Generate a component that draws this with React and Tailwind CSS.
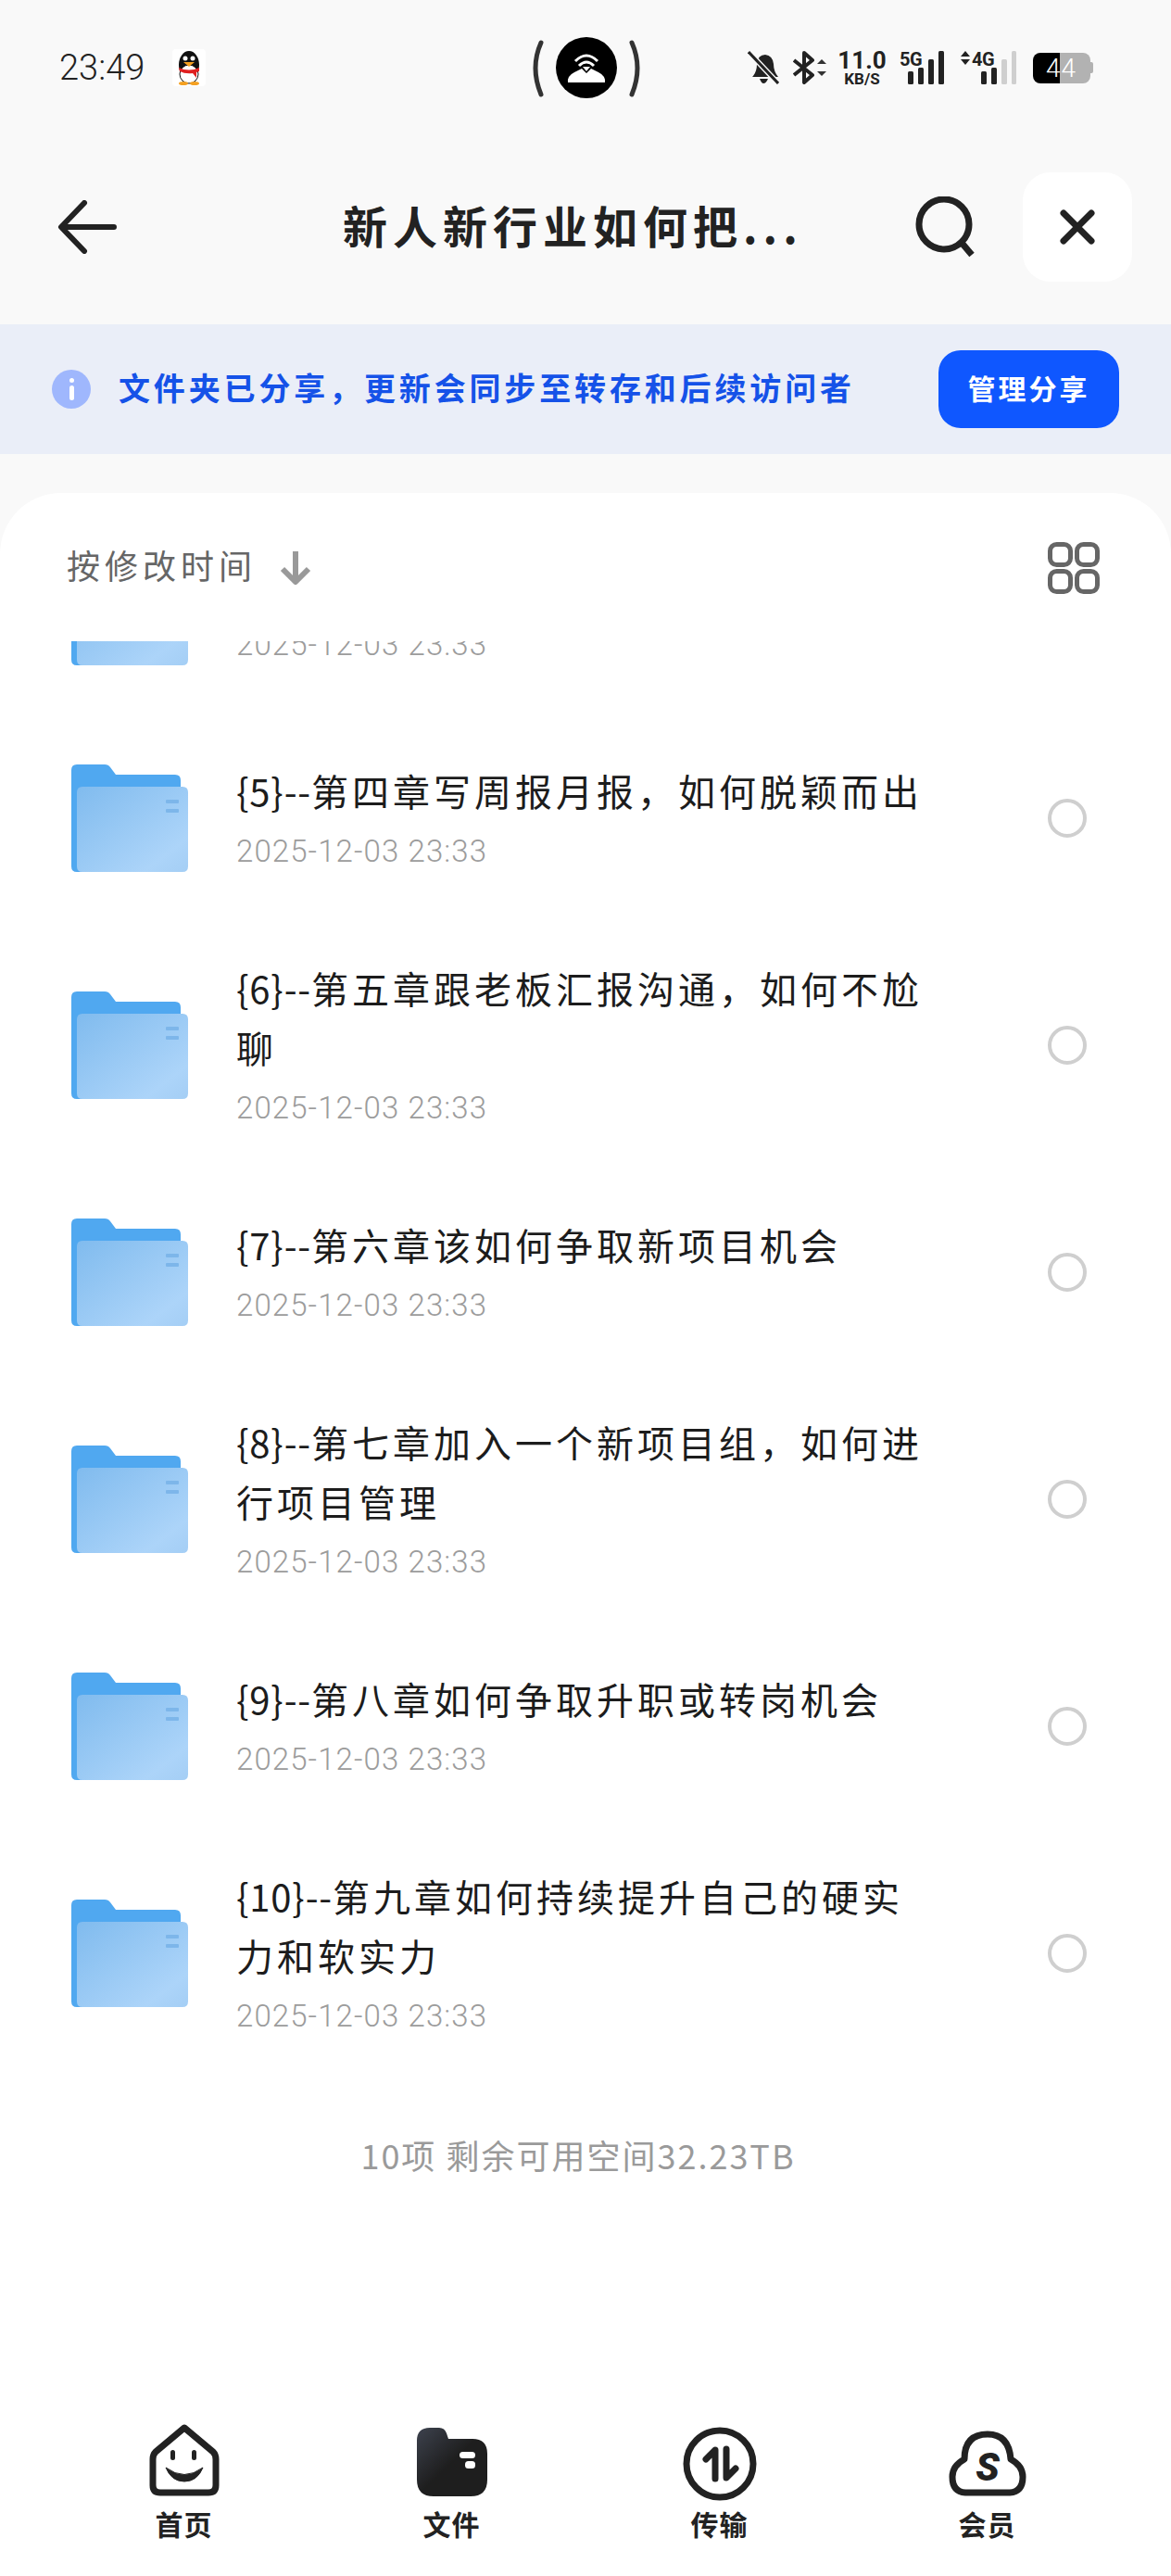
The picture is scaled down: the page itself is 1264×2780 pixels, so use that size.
const files = [
  { id: 5, prefix: '{5}--', title: '第四章写周报月报，如何脱颖而出' },
  { id: 6, prefix: '{6}--', title: '第五章跟老板汇报沟通，如何不尬聊' },
  { id: 7, prefix: '{7}--', title: '第六章该如何争取新项目机会' },
  { id: 8, prefix: '{8}--', title: '第七章加入一个新项目组，如何进行项目管理' },
  { id: 9, prefix: '{9}--', title: '第八章如何争取升职或转岗机会' },
  { id: 10, prefix: '{10}--', title: '第九章如何持续提升自己的硬实力和软实力' },
]

const DATE = '2025-12-03 23:33'

const Folder = ({ id }) => (
  <svg width="126" height="116" viewBox="0 0 126 116" className="shrink-0">
    <defs>
      <linearGradient id={`folder-${id}`} x1="0" y1="0" x2="1" y2="1">
        <stop offset="0" stopColor="#80bbee" />
        <stop offset="0.8" stopColor="#acd4f9" />
        <stop offset="1" stopColor="#a4cef5" />
      </linearGradient>
    </defs>
    <path d="M0 6Q0 0 6 0H36Q40 0 42 3L48 11H112Q118 11 118 17V112Q118 116 112 116H6Q0 116 0 110Z" fill="#50a8f0" />
    <path d="M6 30Q6 24 12 24H120Q126 24 126 30V110Q126 116 120 116H12Q6 116 6 110Z" fill={`url(#folder-${id})`} />
    <rect x="102" y="38" width="14" height="4" rx="1" fill="#7db6ea" />
    <rect x="102" y="48" width="14" height="4" rx="1" fill="#7db6ea" />
  </svg>
)

const FileRow = ({ id, prefix, title }) => (
  <div className="flex h-[245px] items-center pl-[77px] pr-[91px]">
    <Folder id={id} />
    <div className="ml-[52px] w-[770px]">
      <p className="w-[760px] text-[40px] leading-[64px] tracking-[4px] text-[#1c1c1c]">
        <span className="tracking-[0.8px]">{prefix}</span>
        {title}
      </p>
      <p className="mt-[8px] font-['Roboto',sans-serif] text-[33px] font-light leading-[52px] tracking-[1.1px] text-[#9c9c9c]">{DATE}</p>
    </div>
    <div className="ml-auto h-[42px] w-[42px] rounded-full border-4 border-[#cfcfcf]" />
  </div>
)

const StatusBar = () => (
  <div className="flex h-[146px] items-center pl-[64px]">
    <span className="w-[92px] font-['Roboto',sans-serif] text-[38px] font-light leading-none text-[#222]">23:49</span>
    <svg width="36" height="40" viewBox="0 0 36 40" className="ml-[30px]">
      <rect width="36" height="40" rx="4" fill="#ffffff" />
      <ellipse cx="18" cy="17" rx="11" ry="15" fill="#111" />
      <ellipse cx="18" cy="27" rx="10" ry="10" fill="#fff" stroke="#111" strokeWidth="1" />
      <circle cx="14" cy="10" r="2.5" fill="#fff" />
      <circle cx="22" cy="10" r="2.5" fill="#fff" />
      <path d="M12 14H24L18 19Z" fill="#f5a020" />
      <path d="M7 20Q18 25 29 20V24L26 25L26 31L22 26Q14 27 8 24Z" fill="#e02020" />
      <ellipse cx="12" cy="37" rx="5" ry="2" fill="#f5a020" />
      <ellipse cx="24" cy="37" rx="5" ry="2" fill="#f5a020" />
    </svg>
    <svg width="118" height="66" viewBox="0 0 118 66" className="ml-[352px]">
      <path d="M10 6Q-2 33 10 62" fill="none" stroke="#333" strokeWidth="5" strokeLinecap="round" />
      <path d="M108 6Q120 33 108 62" fill="none" stroke="#333" strokeWidth="5" strokeLinecap="round" />
      <circle cx="59" cy="33" r="33" fill="#000" />
      <path d="M39 49Q38 42 46 38Q50 36 54 34L59 39L64 34Q68 36 72 38Q80 42 79 49Z" fill="#fff" />
      <path d="M47 26Q59 14 71 26" fill="none" stroke="#fff" strokeWidth="3" />
      <path d="M51 31Q59 23 67 31" fill="none" stroke="#fff" strokeWidth="3" />
      <path d="M55 32H63L59 37Z" fill="#fff" />
    </svg>
    <svg width="34" height="36" viewBox="0 0 34 36" className="ml-[115px]">
      <path d="M6 27Q10 22 10 14Q11 4 19 4Q27 5 28 14Q28 22 33 28H5Z" fill="#222" />
      <path d="M13 30H22Q20 35 17 35Q15 35 13 30Z" fill="#222" />
      <path d="M1 1L33 35" stroke="#f9f9f9" strokeWidth="6" />
      <path d="M1 1L33 35" stroke="#222" strokeWidth="3" />
    </svg>
    <svg width="36" height="36" viewBox="0 0 36 36" className="ml-[15px]">
      <path d="M1 10L21 26L12 34V2L21 10L1 26" fill="none" stroke="#222" strokeWidth="4" strokeLinejoin="round" />
      <path d="M26 14L31 9L36 14Z" fill="#333" />
      <path d="M26 22L31 27L36 22Z" fill="#333" />
    </svg>
    <div className="ml-[14px] flex w-[49px] flex-col items-center font-['Roboto',sans-serif] font-bold text-[#222]">
      <span className="text-[26px] leading-[22px]">11.0</span>
      <span className="mt-[2px] text-[17px] leading-[14px]">KB/S</span>
    </div>
    <svg width="48" height="36" viewBox="0 0 48 36" className="ml-[16px] overflow-visible">
      <text x="0" y="16" fontFamily="Roboto" fontWeight="700" fontSize="20" letterSpacing="-0.5" fill="#222">5G</text>
      <rect x="9" y="22" width="6" height="14" rx="1.5" fill="#222" />
      <rect x="20" y="18" width="6" height="18" rx="1.5" fill="#222" />
      <rect x="31" y="9" width="6" height="27" rx="1.5" fill="#222" />
      <rect x="42" y="0" width="6" height="36" rx="1.5" fill="#222" />
    </svg>
    <svg width="60" height="36" viewBox="0 0 60 36" className="ml-[18px] overflow-visible">
      <path d="M0 6L5 0L10 6Z" fill="#222" />
      <path d="M0 9L5 15L10 9Z" fill="#222" />
      <text x="12" y="16" fontFamily="Roboto" fontWeight="700" fontSize="20" letterSpacing="-0.5" fill="#222">4G</text>
      <rect x="22" y="22" width="6" height="14" rx="1.5" fill="#222" />
      <rect x="33" y="18" width="6" height="18" rx="1.5" fill="#222" />
      <rect x="44" y="9" width="6" height="27" rx="1.5" fill="#cfcfcf" />
      <rect x="55" y="0" width="5" height="36" rx="1.5" fill="#cfcfcf" />
    </svg>
    <div className="relative ml-[18px] flex items-center">
      <div className="h-[33px] w-[29px] rounded-l-[8px] bg-black" />
      <div className="h-[33px] w-[33px] rounded-r-[8px] bg-[#b2b2b2]" />
      <div className="h-[12px] w-[3px] rounded-r-[2px] bg-[#b2b2b2]" />
      <span className="absolute left-[14px] top-0 font-['Roboto',sans-serif] text-[28px] font-light leading-[33px] tracking-[1px] text-white">44</span>
    </div>
  </div>
)

const Header = () => (
  <div className="mt-[40px] flex h-[118px] items-center pl-[62px]">
    <svg width="64" height="58" viewBox="0 0 64 58">
      <path d="M61 29H5M29 3L4 29L29 55" fill="none" stroke="#222" strokeWidth="6" strokeLinecap="round" strokeLinejoin="round" />
    </svg>
    <h1 className="mb-[6px] ml-[244px] w-[600px] text-[48px] font-bold leading-none tracking-[6px] text-[#222]">新人新行业如何把...</h1>
    <svg width="66" height="66" viewBox="0 0 66 66" className="ml-[18px]">
      <circle cx="31" cy="30" r="27" fill="none" stroke="#222" strokeWidth="7" />
      <path d="M50 50L61 63" stroke="#222" strokeWidth="7" />
    </svg>
    <div className="ml-[50px] flex h-[118px] w-[118px] items-center justify-center rounded-[30px] bg-white">
      <svg width="38" height="38" viewBox="0 0 38 38">
        <path d="M4 4L34 34M34 4L4 34" stroke="#222" strokeWidth="7" strokeLinecap="round" />
      </svg>
    </div>
  </div>
)

const ShareBanner = () => (
  <div className="mt-[46px] flex h-[140px] items-center bg-[#eaeef8] pl-[56px] pr-[56px]">
    <div className="flex h-[42px] w-[42px] flex-col items-center justify-center gap-[3px] rounded-full bg-[#9fb7fd]">
      <div className="h-[5px] w-[5px] rounded-full bg-white" />
      <div className="h-[16px] w-[5px] rounded-full bg-white" />
    </div>
    <p className="mb-[5px] ml-[30px] text-[34px] font-bold leading-none tracking-[3.85px] text-[#1552e8]">文件夹已分享，更新会同步至转存和后续访问者</p>
    <button className="ml-auto flex h-[84px] w-[195px] items-center justify-center rounded-[24px] bg-[#0f57ff] pb-[4px] text-[30px] font-bold tracking-[3px] text-white">管理分享</button>
  </div>
)

const NavItem = ({ label, children }) => (
  <div className="flex flex-col items-center">
    <div className="flex h-[84px] items-end">{children}</div>
    <span className="mt-[4px] text-[30px] font-bold leading-[40px] tracking-[1px] text-[#222]">{label}</span>
  </div>
)

const BottomNav = () => (
  <div className="mt-auto grid h-[186px] grid-cols-4 px-[54px] pt-[21px]">
    <NavItem label="首页">
      <svg width="76" height="78" viewBox="0 0 76 78" className="mb-[5px]">
        <path d="M38 4L69 30Q72 33 72 38V66Q72 74 64 74H12Q4 74 4 66V38Q4 33 7 30Z" fill="none" stroke="#222" strokeWidth="7" strokeLinejoin="round" />
        <rect x="23" y="28" width="5" height="11" rx="2.5" fill="#222" />
        <rect x="46" y="28" width="5" height="11" rx="2.5" fill="#222" />
        <path d="M18 47Q38 62 58 47Q52 62 38 62Q24 62 18 47Z" fill="#222" stroke="#222" strokeWidth="1" strokeLinejoin="round" />
      </svg>
    </NavItem>
    <NavItem label="文件">
      <svg width="76" height="74" viewBox="0 0 76 74" className="mb-[5px]">
        <defs>
          <linearGradient id="nav-files" x1="0" y1="0" x2="1" y2="1">
            <stop offset="0" stopColor="#3d424e" />
            <stop offset="0.5" stopColor="#1e1e1e" />
            <stop offset="1" stopColor="#1e1e1e" />
          </linearGradient>
        </defs>
        <path d="M0 14Q0 0 14 0H24Q30 0 32 6L34 12H60Q76 12 76 28V56Q76 74 58 74H18Q0 74 0 56Z" fill="url(#nav-files)" />
        <rect x="46" y="26" width="17" height="7" rx="3.5" fill="#fff" />
        <rect x="52" y="36" width="11" height="8" rx="3.5" fill="#fff" />
      </svg>
    </NavItem>
    <NavItem label="传输">
      <svg width="80" height="80" viewBox="0 0 80 80">
        <circle cx="40" cy="40" r="36" fill="none" stroke="#222" strokeWidth="7" />
        <path d="M35 56V25L25 35" fill="none" stroke="#222" strokeWidth="7" strokeLinecap="round" strokeLinejoin="round" />
        <path d="M47 24V55L57 45" fill="none" stroke="#222" strokeWidth="7" strokeLinecap="round" strokeLinejoin="round" />
      </svg>
    </NavItem>
    <NavItem label="会员">
      <svg width="84" height="72" viewBox="0 0 84 72" className="mb-[4px]">
        <path d="M18 67Q4 66 4 50Q4 38 17 31Q17 4 42 4Q65 4 67 31Q80 38 80 50Q80 66 66 67Z" fill="none" stroke="#222" strokeWidth="7" strokeLinejoin="round" />
        <text x="42" y="54" textAnchor="middle" fontFamily="Roboto" fontWeight="900" fontStyle="italic" fontSize="42" fill="#222">S</text>
      </svg>
    </NavItem>
  </div>
)

export default function App() {
  return (
    <div className="flex h-[2780px] w-[1264px] flex-col overflow-hidden bg-[#f9f9f9] font-['Noto_Sans_CJK_SC',sans-serif]">
      <StatusBar />
      <Header />
      <ShareBanner />
      <div className="mt-[42px] flex flex-1 flex-col rounded-t-[66px] bg-white">
        <div className="flex h-[160px] items-start pl-[72px] pr-[77px] pt-[55px]">
          <span className="text-[36px] leading-[44px] tracking-[5px] text-[#666]">按修改时间</span>
          <svg width="36" height="38" viewBox="0 0 36 38" className="ml-[24px] mt-[6px]">
            <path d="M18 2V34M4 21L18 35L32 21" fill="none" stroke="#999" strokeWidth="6" strokeLinejoin="round" />
          </svg>
          <svg width="56" height="56" viewBox="0 0 56 56" className="ml-auto -mt-[2px]">
            <rect x="2.5" y="2.5" width="22" height="22" rx="7" fill="none" stroke="#666" strokeWidth="5" />
            <rect x="31.5" y="2.5" width="22" height="22" rx="7" fill="none" stroke="#666" strokeWidth="5" />
            <rect x="2.5" y="31.5" width="22" height="22" rx="7" fill="none" stroke="#666" strokeWidth="5" />
            <rect x="31.5" y="31.5" width="22" height="22" rx="7" fill="none" stroke="#666" strokeWidth="5" />
          </svg>
        </div>
        {/* row scrolled mostly under the sort bar */}
        <div className="flex h-[68px] items-start overflow-hidden pl-[77px]">
          <div className="-mt-[90px]">
            <Folder id={4} />
          </div>
          <p className="-mt-[22px] ml-[52px] font-['Roboto',sans-serif] text-[33px] font-light leading-[52px] tracking-[1.1px] text-[#9c9c9c]">{DATE}</p>
        </div>
        {files.map((file) => (
          <FileRow key={file.id} id={file.id} prefix={file.prefix} title={file.title} />
        ))}
        <p className="mt-[70px] pr-[16px] text-center text-[36px] leading-[50px] tracking-[2px] text-[#9a9a9a]">10项 剩余可用空间32.23TB</p>
        <BottomNav />
      </div>
    </div>
  )
}
